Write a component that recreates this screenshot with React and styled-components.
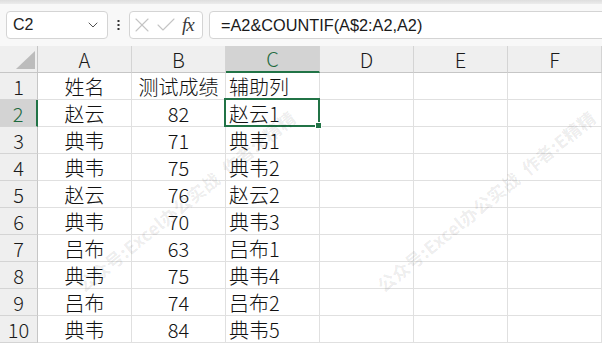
import React from "react";
import styled, { createGlobalStyle } from "styled-components";
import { ChevronDown, X, Check } from "lucide-react";

const GlobalStyle = createGlobalStyle`
  body {
    margin: 0;
    background: #fff;
    font-family: "Noto Sans CJK SC", "Noto Sans", sans-serif;
  }
`;

const Page = styled.div`
  width: 602px;
  height: 343px;
  overflow: hidden;
  background: #fff;
`;

const RibbonEdge = styled.div`
  height: 4px;
  background: linear-gradient(#dedede, #ececec);
`;

const FormulaBar = styled.div`
  height: 42px;
  display: flex;
  align-items: center;
  padding-left: 6px;
  background: #f8f8f8;
  overflow: hidden;
`;

const Box = styled.div`
  height: 28px;
  box-sizing: border-box;
  background: #fff;
  border: 1px solid #d4d4d4;
  border-radius: 4px;
  display: flex;
  align-items: center;
`;

const NameBox = styled(Box)`
  width: 102px;
  padding: 0 6px 0 6px;
  justify-content: space-between;
  font-family: "Liberation Sans", sans-serif;
  font-size: 16px;
  color: #222;
`;

const Grip = styled.div`
  width: 21px;
  display: flex;
  justify-content: center;
`;

const FnBox = styled(Box)`
  width: 74px;
  padding-left: 0;
  color: #c4c4c4;
`;

const Fx = styled.span`
  font-family: "Liberation Serif", serif;
  font-style: italic;
  font-size: 19px;
  color: #3a3a3a;
  margin-left: 4px;
  letter-spacing: -1px;
`;

const FormulaBox = styled(Box)`
  flex: 1;
  margin-left: 6px;
  margin-right: -6px;
  padding-left: 11px;
  font-family: "Liberation Sans", sans-serif;
  font-size: 16.3px;
  color: #1a1a1a;
`;

const Sheet = styled.div`
  position: relative;
  display: grid;
  grid-template-columns: 38px repeat(6, 94px);
  grid-auto-rows: 27px;
  background: #fff;
`;

const HeadBase = styled.div`
  box-sizing: border-box;
  background: ${(p) => (p.$active ? "#d3d3d3" : "#efefef")};
  color: ${(p) => (p.$active ? "#1d6a3e" : "#1a1a1a")};
  display: flex;
  align-items: center;
  justify-content: center;
  font-size: 20px;
  font-weight: 300;
`;

const Corner = styled(HeadBase)`
  border-right: 1px solid #c6c6c6;
  border-bottom: 1px solid #c6c6c6;
  align-items: flex-end;
  justify-content: flex-end;
  padding: 0 2px 3px 0;
`;

const ColHead = styled(HeadBase)`
  border-right: 1px solid #d4d4d4;
  border-bottom: ${(p) => (p.$active ? "2px solid #217346" : "1px solid #c6c6c6")};
`;

const RowHead = styled(HeadBase)`
  border-right: ${(p) => (p.$active ? "2px solid #217346" : "1px solid #c6c6c6")};
  border-bottom: 1px solid #d4d4d4;
`;

const Cell = styled.div`
  position: relative;
  box-sizing: border-box;
  border-right: 1px solid #e0e0e0;
  border-bottom: 1px solid #e0e0e0;
  display: flex;
  align-items: center;
  justify-content: ${(p) => (p.$align === "left" ? "flex-start" : "center")};
  padding: 0 3px;
  font-size: 20px;
  font-weight: 300;
  color: #111;
  white-space: nowrap;
`;

const Selection = styled.div`
  position: absolute;
  top: -2px;
  left: -2px;
  right: -1px;
  bottom: -1px;
  border: 2px solid #217346;
  pointer-events: none;
  z-index: 2;
`;

const FillHandle = styled.div`
  position: absolute;
  right: -4px;
  bottom: -4px;
  width: 5px;
  height: 5px;
  background: #217346;
  border: 1px solid #fff;
`;

const Watermark = styled.span`
  position: absolute;
  transform: translate(-50%, -50%) rotate(-39deg);
  font-size: 17.5px;
  font-weight: 700;
  letter-spacing: 0.4px;
  color: rgba(0, 0, 0, 0.085);
  white-space: pre;
  pointer-events: none;
  z-index: 3;
`;

const cols = ["A", "B", "C", "D", "E", "F"];
const data = [
  ["姓名", "测试成绩", "辅助列"],
  ["赵云", "82", "赵云1"],
  ["典韦", "71", "典韦1"],
  ["典韦", "75", "典韦2"],
  ["赵云", "76", "赵云2"],
  ["典韦", "70", "典韦3"],
  ["吕布", "63", "吕布1"],
  ["典韦", "75", "典韦4"],
  ["吕布", "74", "吕布2"],
  ["典韦", "84", "典韦5"],
];

const marks = [186, 486];

const GripDots = () => (
  <svg width="3" height="10" viewBox="0 0 3 10">
    <rect x="0.5" y="0" width="2" height="2" fill="#333" />
    <rect x="0.5" y="4" width="2" height="2" fill="#333" />
    <rect x="0.5" y="8" width="2" height="2" fill="#333" />
  </svg>
);

const App = () => {
  return (
    <Page>
      <GlobalStyle />
      <RibbonEdge />
      <FormulaBar>
        <NameBox>
          C2
          <ChevronDown size={16} strokeWidth={1.4} color="#444" />
        </NameBox>
        <Grip>
          <GripDots />
        </Grip>
        <FnBox>
          <X size={24} strokeWidth={1.1} />
          <Check size={24} strokeWidth={1.1} />
          <Fx>fx</Fx>
        </FnBox>
        <FormulaBox>=A2&amp;COUNTIF(A$2:A2,A2)</FormulaBox>
      </FormulaBar>
      <Sheet>
        <Corner>
          <svg width="19" height="18" viewBox="0 0 19 18">
            <polygon points="19,0 19,18 0,18" fill="#bcbcbc" />
          </svg>
        </Corner>
        {cols.map((c) => (
          <ColHead key={c} $active={c === "C"}>
            {c}
          </ColHead>
        ))}
        {data.map((row, r) => (
          <React.Fragment key={r}>
            <RowHead $active={r === 1}>{r + 1}</RowHead>
            <Cell>{row[0]}</Cell>
            <Cell>{row[1]}</Cell>
            <Cell $align="left">
              {row[2]}
              {r === 1 && (
                <Selection>
                  <FillHandle />
                </Selection>
              )}
            </Cell>
            <Cell />
            <Cell />
            <Cell />
          </React.Fragment>
        ))}
        {marks.map((x) => (
          <Watermark key={x} style={{ left: x, top: 155 }}>
            公众号:Excel办公实战  作者:E精精
          </Watermark>
        ))}
      </Sheet>
    </Page>
  );
};

export default App;
